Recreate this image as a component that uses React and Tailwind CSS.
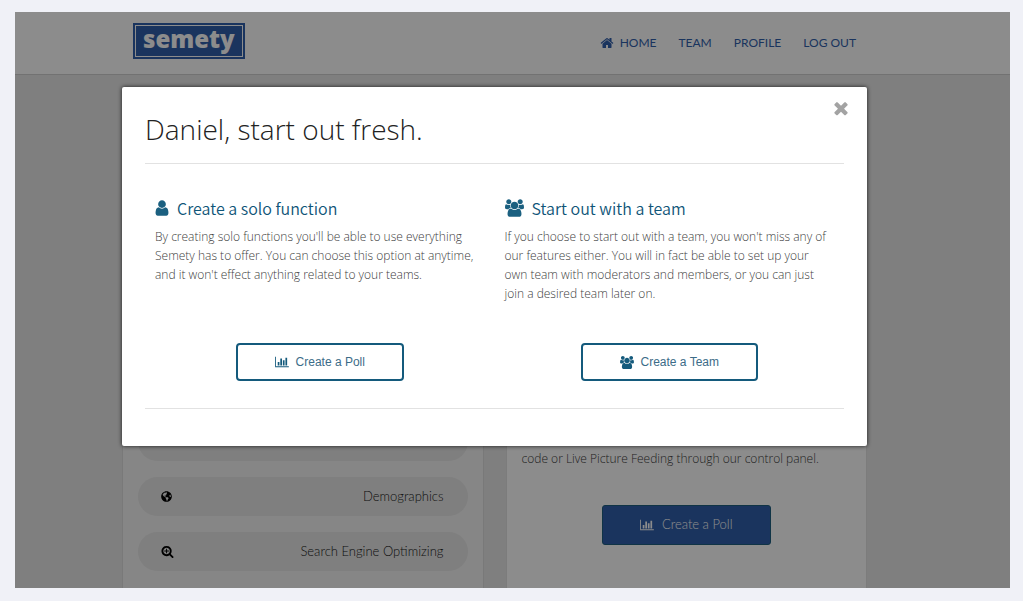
import React from "react";
import { FaGlobeAmericas } from "react-icons/fa";

function Glyph({ box = "0 0 1792 1792", d, className }) {
  return (
    <svg viewBox={box} fill="currentColor" aria-hidden="true" className={className}>
      <path d={d} />
    </svg>
  );
}

const HOME =
  "M1472 992v480q0 26-19 45t-45 19h-384v-384h-256v384h-384q-26 0-45-19t-19-45v-480q0-1 .5-3t.5-3l575-474 575 474q1 2 1 6zm223-69l-62 74q-8 9-21 11h-3q-13 0-21-7l-692-577-692 577q-12 8-24 7-13-2-21-11l-62-74q-8-10-7-23.5t11-21.5l719-599q32-26 76-26t76 26l244 204v-195q0-14 9-23t23-9h192q14 0 23 9t9 23v408l219 182q10 8 11 21.5t-7 23.5z";
const CHART =
  "M640 896v512h-256v-512h256zm384-512v1024h-256v-1024h256zm1024 1152v128h-2048v-1536h128v1408h1920zm-640-896v768h-256v-768h256zm384-384v1152h-256v-1152h256z";
const USER =
  "M1536 1399q0 109-62.5 187t-150.5 78h-854q-88 0-150.5-78t-62.5-187q0-85 8.5-160.5t31.5-152 58.5-131 94-89 134.5-34.5q131 128 313 128t313-128q76 0 134.5 34.5t94 89 58.5 131 31.5 152 8.5 160.5zm-256-887q0 159-112.5 271.5t-271.5 112.5-271.5-112.5-112.5-271.5 112.5-271.5 271.5-112.5 271.5 112.5 112.5 271.5z";
const USERS =
  "M593 896q-162 5-265 128h-134q-82 0-138-40.5t-56-118.5q0-353 124-353 6 0 43.5 21t97.5 42.5 119 21.5q67 0 133-23-5 37-5 66 0 139 81 256zm1071 637q0 120-73 189.5t-194 69.5h-874q-121 0-194-69.5t-73-189.5q0-53 3.5-103.5t14-109 26.5-108.5 43-97.5 62-81 85.5-53.5 111.5-20q10 0 43 21.5t73 48 107 48 135 21.5 135-21.5 107-48 73-48 43-21.5q61 0 111.5 20t85.5 53.5 62 81 43 97.5 26.5 108.5 14 109 3.5 103.5zm-1024-1277q0 106-75 181t-181 75-181-75-75-181 75-181 181-75 181 75 75 181zm704 384q0 159-112.5 271.5t-271.5 112.5-271.5-112.5-112.5-271.5 112.5-271.5 271.5-112.5 271.5 112.5 112.5 271.5zm576 225q0 78-56 118.5t-138 40.5h-134q-103-123-265-128 81-117 81-256 0-29-5-66 66 23 133 23 59 0 119-21.5t97.5-42.5 43.5-21q124 0 124 353zm-128-609q0 106-75 181t-181 75-181-75-75-181 75-181 181-75 181 75 75 181z";
const TIMES =
  "M1490 1322q0 40-28 68l-136 136q-28 28-68 28t-68-28l-294-294-294 294q-28 28-68 28t-68-28l-136-136q-28-28-28-68t28-68l294-294-294-294q-28-28-28-68t28-68l136-136q28-28 68-28t68 28l294 294 294-294q28-28 68-28t68 28l136 136q28 28 28 68t-28 68l-294 294 294 294q28 28 28 68z";
const SEARCH_PLUS =
  "M1088 800v64q0 13-9.5 22.5t-22.5 9.5h-224v224q0 13-9.5 22.5t-22.5 9.5h-64q-13 0-22.5-9.5t-9.5-22.5v-224h-224q-13 0-22.5-9.5t-9.5-22.5v-64q0-13 9.5-22.5t22.5-9.5h224v-224q0-13 9.5-22.5t22.5-9.5h64q13 0 22.5 9.5t9.5 22.5v224h224q13 0 22.5 9.5t9.5 22.5zm128 32q0-185-131.5-316.5t-316.5-131.5-316.5 131.5-131.5 316.5 131.5 316.5 316.5 131.5 316.5-131.5 131.5-316.5zm512 832q0 53-37.5 90.5t-90.5 37.5q-54 0-90-38l-343-342q-179 124-399 124-143 0-273.5-55.5t-225-150-150-225-55.5-273.5 55.5-273.5 150-225 225-150 273.5-55.5 273.5 55.5 225 150 150 225 55.5 273.5q0 220-124 399l343 343q37 37 37 90z";

function Header() {
  return (
    <header className="border-b border-[#cfcfcf] bg-white pr-9">
      <div className="mx-auto flex h-[62px] max-w-[745px] items-center justify-between px-[11px]">
        <a href="#" className="mb-1 border-2 border-[#315fab] bg-white p-px">
          <span className="flex h-[30px] items-start justify-center bg-[#315fab] px-[7px] font-['Open_Sans',sans-serif] text-2xl leading-[26px] font-extrabold text-white">
            semety
          </span>
        </a>
        <nav className="flex gap-[22px] font-['Lato',sans-serif] text-xs text-[#315fab]">
          <a href="#" className="flex items-center gap-1.5">
            <Glyph d={HOME} className="size-[14px]" />
            HOME
          </a>
          <a href="#">TEAM</a>
          <a href="#">PROFILE</a>
          <a href="#">LOG OUT</a>
        </nav>
      </div>
    </header>
  );
}

function Pill({ icon, children }) {
  return (
    <li>
      <a
        href="#"
        className="flex h-[39px] items-center justify-between rounded-full bg-[#e7e7e7] pr-6 pl-[23px] font-['Lato',sans-serif] text-[13px] font-light text-[#202020]"
      >
        <span className="text-black">{icon}</span>
        {children}
      </a>
    </li>
  );
}

function Page() {
  return (
    <div className="flex flex-1 flex-col bg-[#e7e7e7]">
      <Header />
      <main className="flex flex-1 pr-9">
        <div className="mx-auto grid w-full max-w-[745px] grid-cols-2 gap-[22px] pt-6">
          <section className="flex flex-col justify-end border-x border-[#dcdcdc] bg-[#f4f4f4] px-[15px] pb-[17px]">
            <ul className="flex flex-col gap-4">
              <Pill />
              <Pill icon={<FaGlobeAmericas className="size-[11px]" />}>Demographics</Pill>
              <Pill icon={<Glyph d={SEARCH_PLUS} className="size-[13px]" />}>Search Engine Optimizing</Pill>
            </ul>
          </section>
          <section className="flex flex-col items-center justify-end border-x border-[#e2e2e2] bg-white px-[15px] pb-[43px]">
            <p className="w-full font-['Open_Sans',sans-serif] text-xs leading-[19px] font-light text-[#404040]">
              code or Live Picture Feeding through our control panel.
            </p>
            <button
              type="button"
              className="mt-[37px] flex h-10 items-center gap-2 rounded-[3px] border border-[#1e5f80] bg-[#315fab] px-[37px] font-['Lato',sans-serif] text-[13px] font-light text-white"
            >
              <Glyph box="0 0 2048 1792" d={CHART} className="h-3 w-[14px]" />
              Create a Poll
            </button>
          </section>
        </div>
      </main>
    </div>
  );
}

function Option({ icon, title, text, action }) {
  return (
    <section className="flex flex-col px-[10px]">
      <h2 className="flex items-center gap-2 font-['Noto_Sans_CJK_SC',sans-serif] text-base leading-6 font-[350] text-[#0f5578]">
        {icon}
        {title}
      </h2>
      <p className="mt-[7px] pr-1 font-['Open_Sans',sans-serif] text-xs leading-[19px] font-light text-[#404040]">
        {text}
      </p>
      <div className="mt-auto flex justify-center">{action}</div>
    </section>
  );
}

function OutlineButton({ icon, children }) {
  return (
    <button
      type="button"
      className="flex h-[38px] items-center gap-[7px] rounded-[4px] border-2 border-[#145a7c] px-[37px] font-['Liberation_Sans',sans-serif] text-xs text-[#3c6c88]"
    >
      {icon}
      {children}
    </button>
  );
}

function StartDialog() {
  return (
    <div className="absolute inset-0 bg-black/45 pt-[75px] pr-9">
      <div
        role="dialog"
        aria-labelledby="start-title"
        className="relative mx-auto max-w-[745px] rounded-xs bg-white px-[23px] pt-[23px] pb-[37px] shadow-[0_0_4px_rgba(0,0,0,0.8)]"
      >
        <button type="button" aria-label="Close" className="absolute top-[11px] right-4 text-[#a3a3a3]">
          <Glyph d={TIMES} className="size-5" />
        </button>
        <h1
          id="start-title"
          className="font-['Open_Sans',sans-serif] text-[28px] leading-[38px] font-light text-[#222222]"
        >
          Daniel, start out fresh.
        </h1>
        <div className="mt-[15px] grid h-[246px] grid-cols-2 border-y border-[#e2e2e2] pt-8 pb-[27px]">
          <Option
            icon={<Glyph d={USER} className="-mx-0.5 size-[18px] text-[#1b6080]" />}
            title="Create a solo function"
            text="By creating solo functions you'll be able to use everything Semety has to offer. You can choose this option at anytime, and it won't effect anything related to your teams."
            action={
              <OutlineButton
                icon={<Glyph box="0 0 2048 1792" d={CHART} className="h-3 w-[14px] text-[#145a7c]" />}
              >
                Create a Poll
              </OutlineButton>
            }
          />
          <Option
            icon={<Glyph box="0 0 1920 1792" d={USERS} className="h-[18px] w-[19px] text-[#1b6080]" />}
            title="Start out with a team"
            text="If you choose to start out with a team, you won't miss any of our features either. You will in fact be able to set up your own team with moderators and members, or you can just join a desired team later on."
            action={
              <OutlineButton icon={<Glyph box="0 0 1920 1792" d={USERS} className="h-[13px] w-[14px] text-[#145a7c]" />}>
                Create a Team
              </OutlineButton>
            }
          />
        </div>
      </div>
    </div>
  );
}

export default function App() {
  return (
    <div className="flex min-h-screen bg-[#f0f1f7] pt-3 pr-[13px] pb-[13px] pl-[15px]">
      <div className="relative flex flex-1 overflow-hidden">
        <Page />
        <StartDialog />
      </div>
    </div>
  );
}
